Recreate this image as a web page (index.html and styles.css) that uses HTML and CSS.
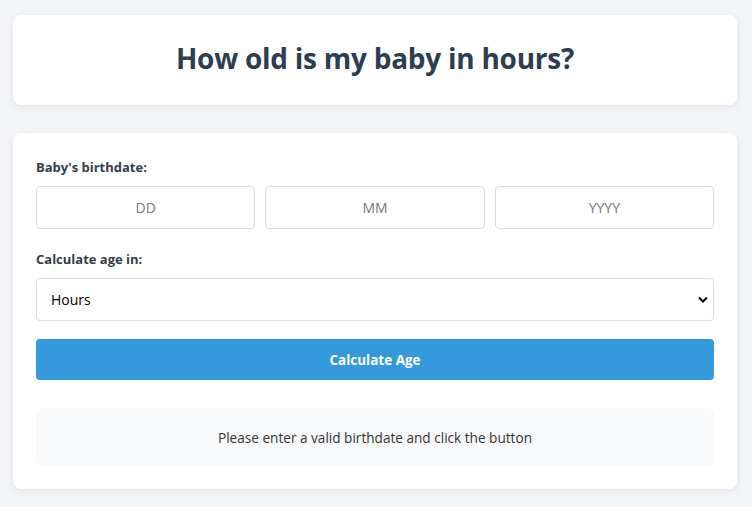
FILE: index.html
```html
<!DOCTYPE html>
<html lang="en">
<head>
<meta charset="utf-8">
<title>Baby Age Calculator</title>
<link rel="stylesheet" href="styles.css">
</head>
<body>
<div class="container">
  <header class="card header">
    <h1>How old is my baby in hours?</h1>
  </header>
  <main class="card form">
    <label class="label">Baby's birthdate:</label>
    <div class="date-row">
      <input type="text" class="field" placeholder="DD">
      <input type="text" class="field" placeholder="MM">
      <input type="text" class="field" placeholder="YYYY">
    </div>
    <label class="label">Calculate age in:</label>
    <div class="select-wrap">
      <select class="select">
        <option>Hours</option>
      </select>
      <svg class="chev" width="10" height="7" viewBox="0 0 10 7"><path d="M1 1.5 L5 5.5 L9 1.5" fill="none" stroke="#000" stroke-width="2"/></svg>
    </div>
    <button class="btn">Calculate Age</button>
    <div class="result">Please enter a valid birthdate and click the button</div>
  </main>
</div>
</body>
</html>
```
FILE: styles.css
```css
* { box-sizing: border-box; }
html, body { margin: 0; padding: 0; }
body {
  background: #f4f5f9;
  font-family: "Open Sans", "Noto Sans", sans-serif;
  color: #2c3e50;
}
.container {
  padding: 15px 15px 15px 13px;
  display: flex;
  flex-direction: column;
  gap: 28px;
}
.card {
  background: #fff;
  border-radius: 8px;
  box-shadow: 0 2px 8px rgba(0,0,0,0.08);
}
.header {
  height: 90px;
  padding-bottom: 5px;
  display: flex;
  align-items: center;
  justify-content: center;
}
.header h1 {
  margin: 0;
  font-size: 28px;
  font-weight: 700;
  color: #2c3e50;
  letter-spacing: -0.25px;
}
.form {
  padding: 25px 23px 23px;
  display: flex;
  flex-direction: column;
}
.label {
  font-size: 13px;
  font-weight: 700;
  color: #333d47;
  line-height: 18px;
  margin-bottom: 10px;
}
.date-row {
  display: flex;
  gap: 10px;
  margin-bottom: 21px;
}
.field {
  flex: 1;
  min-width: 0;
  height: 43px;
  border: 1px solid #ddd;
  border-radius: 4px;
  text-align: center;
  font-family: inherit;
  font-size: 14px;
  color: #333;
  outline: none;
}
.field::placeholder { color: #777; }
.select-wrap {
  position: relative;
  margin-bottom: 18px;
}
.select {
  width: 100%;
  height: 43px;
  border: 1px solid #ddd;
  border-radius: 4px;
  background: #fff;
  appearance: none;
  -webkit-appearance: none;
  padding: 0 14px;
  font-family: inherit;
  font-size: 14px;
  color: #000;
  outline: none;
}
.chev {
  position: absolute;
  right: 6px;
  top: 18px;
  pointer-events: none;
}
.btn {
  height: 41px;
  background: #3498db;
  color: #fff;
  border: none;
  border-radius: 4px;
  font-family: inherit;
  font-size: 13.5px;
  font-weight: 700;
  margin-bottom: 28px;
}
.result {
  background: #f8f9fa;
  border-radius: 8px;
  height: 58px;
  display: flex;
  align-items: center;
  justify-content: center;
  font-size: 13.6px;
  color: #333;
}
```
